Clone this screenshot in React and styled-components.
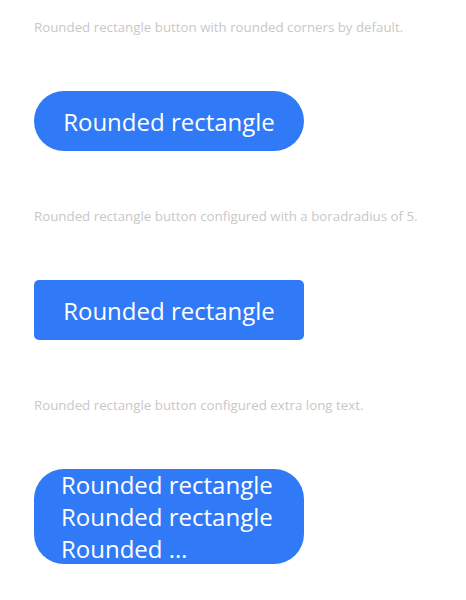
import styled, { createGlobalStyle } from "styled-components";

const GlobalStyle = createGlobalStyle`
  body {
    margin: 0;
    background: #ffffff;
    font-family: "Open Sans", "Noto Sans", sans-serif;
  }
`;

const examples = [
  {
    caption: "Rounded rectangle button with rounded corners by default.",
    label: "Rounded rectangle",
    radius: 30,
  },
  {
    caption: "Rounded rectangle button configured with a boradradius of 5.",
    label: "Rounded rectangle",
    radius: 5,
  },
  {
    caption: "Rounded rectangle button configured extra long text.",
    label: "Rounded rectangle Rounded rectangle Rounded …",
    radius: 30,
    long: true,
  },
];

export default function App() {
  return (
    <>
      <GlobalStyle />
      <Page>
        {examples.map((item) => (
          <Section key={item.caption}>
            <Caption>{item.caption}</Caption>
            <RoundButton $radius={item.radius} $long={item.long}>
              {item.long ? <Clamp>{item.label}</Clamp> : item.label}
            </RoundButton>
          </Section>
        ))}
      </Page>
    </>
  );
}

const Page = styled.div`
  display: flex;
  flex-direction: column;
  gap: 55px;
  padding: 17px 34px 0;
`;

const Section = styled.div`
  display: flex;
  flex-direction: column;
  gap: 54px;
`;

const Caption = styled.p`
  margin: 0;
  font-size: 13.3px;
  line-height: 20px;
  color: #c8c8c8;
`;

const RoundButton = styled.button`
  width: 270px;
  height: ${(p) => (p.$long ? "95px" : "60px")};
  padding: ${(p) => (p.$long ? "0 20px 0 27px" : "0 16px")};
  border: none;
  border-radius: ${(p) => p.$radius}px;
  background: #317af7;
  color: #ffffff;
  font-family: "Open Sans", "Noto Sans", sans-serif;
  font-size: 24px;
  font-weight: 500;
  display: flex;
  align-items: center;
  justify-content: ${(p) => (p.$long ? "flex-start" : "center")};
  overflow: hidden;
  text-align: left;
`;

const Clamp = styled.span`
  display: block;
  flex-shrink: 0;
  width: 222px;
  line-height: 32px;
`;
